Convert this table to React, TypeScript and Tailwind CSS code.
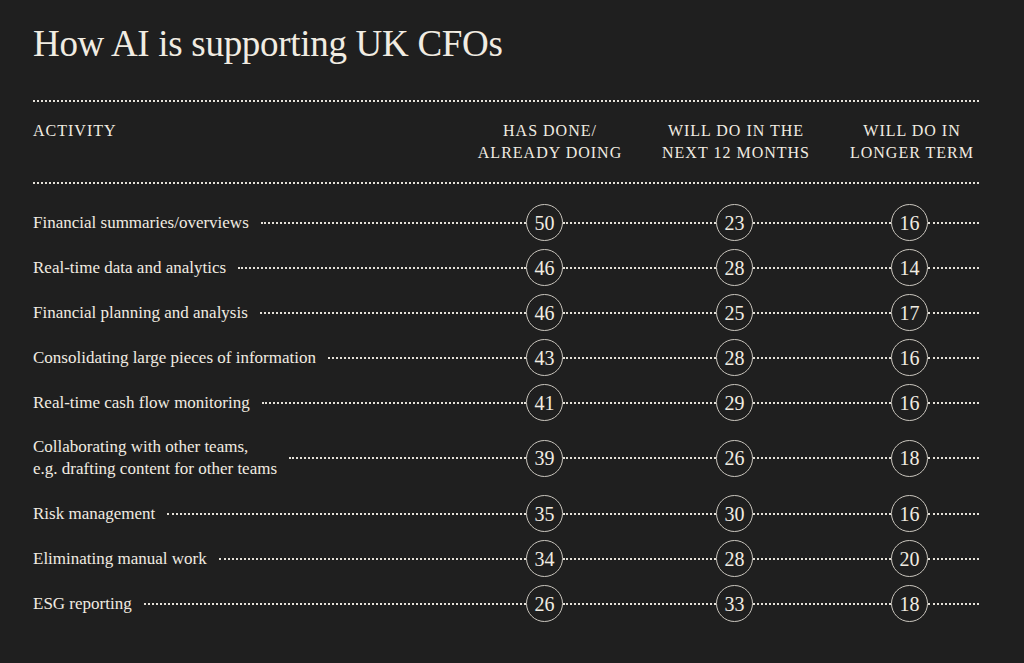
const rows: { label: string[]; values: [number, number, number] }[] = [
  { label: ["Financial summaries/overviews"], values: [50, 23, 16] },
  { label: ["Real-time data and analytics"], values: [46, 28, 14] },
  { label: ["Financial planning and analysis"], values: [46, 25, 17] },
  { label: ["Consolidating large pieces of information"], values: [43, 28, 16] },
  { label: ["Real-time cash flow monitoring"], values: [41, 29, 16] },
  {
    label: ["Collaborating with other teams,", "e.g. drafting content for other teams"],
    values: [39, 26, 18],
  },
  { label: ["Risk management"], values: [35, 30, 16] },
  { label: ["Eliminating manual work"], values: [34, 28, 20] },
  { label: ["ESG reporting"], values: [26, 33, 18] },
];

function Dots({ className = "" }: { className?: string }) {
  return <div className={`border-t-2 border-dotted border-[#e4e0d8] ${className}`} />;
}

function Circle({ value }: { value: number }) {
  return (
    <div className="flex h-[37px] w-[37px] shrink-0 items-center justify-center rounded-full border-[1.5px] border-[#c9c5bd] text-[20px] leading-none">
      {value}
    </div>
  );
}

function Row({ label, values }: { label: string[]; values: [number, number, number] }) {
  return (
    <div className={`flex items-center ${label.length > 1 ? "h-[66px]" : "h-[45px]"}`}>
      <div className="shrink-0 pr-3 text-[17px] leading-[22px]">
        {label.map((line) => (
          <div key={line}>{line}</div>
        ))}
      </div>
      <Dots className="flex-1" />
      <Circle value={values[0]} />
      <Dots className="w-[153px]" />
      <Circle value={values[1]} />
      <Dots className="w-[138px]" />
      <Circle value={values[2]} />
      <Dots className="w-[51px]" />
    </div>
  );
}

export default function App() {
  return (
    <div className="h-[663px] w-[1024px] overflow-hidden bg-[#1f1f1f] pl-[33px] pr-[45px] pt-[25px] font-['Liberation_Serif',serif] text-[#f1ece2]">
      <h1 className="text-[37px] leading-[38px] tracking-[-0.3px]">How AI is supporting UK CFOs</h1>

      <Dots className="mt-[37px]" />

      {/* Column headings */}
      <div className="flex pb-[18px] pt-[18px] text-[16px] uppercase leading-[22px] tracking-[1px]">
        <div className="flex-1">Activity</div>
        <div className="w-[160px] text-center">
          <div>Has done/</div>
          <div>Already doing</div>
        </div>
        <div className="ml-[26px] w-[160px] text-center">
          <div>Will do in the</div>
          <div>Next 12 months</div>
        </div>
        <div className="ml-[29px] w-[134px] whitespace-nowrap text-center">
          <div>Will do in</div>
          <div>Longer term</div>
        </div>
      </div>

      <Dots />

      <div className="pt-4">
        {rows.map((r) => (
          <Row key={r.label[0]} label={r.label} values={r.values} />
        ))}
      </div>
    </div>
  );
}
